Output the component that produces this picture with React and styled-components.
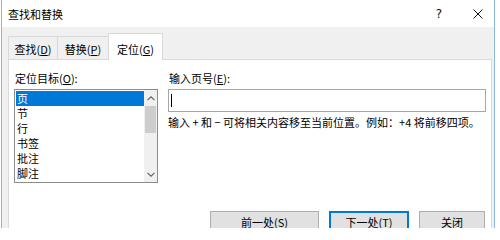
import React from "react";
import styled, { createGlobalStyle } from "styled-components";

const GlobalStyle = createGlobalStyle`
  html, body {
    margin: 0;
    padding: 0;
    background: #fff;
  }
  body {
    font-family: "Noto Sans CJK SC", "Noto Sans", sans-serif;
    font-size: 11px;
    color: #000;
  }
`;

const targets = ["页", "节", "行", "书签", "批注", "脚注"];

const tabs = [
  { text: "查找", key: "D", width: 50 },
  { text: "替换", key: "P", width: 52 },
  { text: "定位", key: "G", width: 55, active: true },
];

const buttons = [
  { text: "前一处", key: "S", width: 109 },
  { text: "下一处", key: "T", width: 80, primary: true },
  { text: "关闭", width: 66 },
];

const Chevron = ({ down }) => (
  <svg width="8" height="5" viewBox="0 0 8 5">
    <path
      d={down ? "M0.5 0.8 L4 4.2 L7.5 0.8" : "M0.5 4.2 L4 0.8 L7.5 4.2"}
      fill="none"
      stroke="#606060"
      strokeWidth="1.1"
    />
  </svg>
);

const Accel = ({ text, k, colon }) => (
  <>
    {text}
    {k && (
      <>
        (<u>{k}</u>)
      </>
    )}
    {colon && ":"}
  </>
);

const App = () => {
  return (
    <>
      <GlobalStyle />
      <Dialog>
        <TitleBar>
          <Title>查找和替换</Title>
          <TitleButtons>
            <TitleBtn>?</TitleBtn>
            <TitleBtn>
              <svg width="10" height="10" viewBox="0 0 10 10">
                <path d="M0.5 0.5 L9.5 9.5 M9.5 0.5 L0.5 9.5" stroke="#111" strokeWidth="1" />
              </svg>
            </TitleBtn>
          </TitleButtons>
        </TitleBar>
        <Body>
          <TabStrip>
            {tabs.map((t, i) => (
              <Tab key={t.text} $active={t.active} $w={t.width} $first={i === 0}>
                <Accel text={t.text} k={t.key} />
              </Tab>
            ))}
          </TabStrip>
          <Panel>
            <Columns>
              <LeftCol>
                <Label>
                  <Accel text="定位目标" k="O" colon />
                </Label>
                <ListBox>
                  <Items>
                    {targets.map((item, i) => (
                      <Item key={item} $selected={i === 0}>
                        {item}
                      </Item>
                    ))}
                  </Items>
                  <ScrollBar>
                    <Arrow>
                      <Chevron />
                    </Arrow>
                    <Thumb />
                    <Track />
                    <Arrow>
                      <Chevron down />
                    </Arrow>
                  </ScrollBar>
                </ListBox>
              </LeftCol>
              <RightCol>
                <Label>
                  <Accel text="输入页号" k="E" colon />
                </Label>
                <PageInput>
                  <Caret />
                </PageInput>
                <Hint>输入 + 和 − 可将相关内容移至当前位置。例如：+4 将前移四项。</Hint>
              </RightCol>
            </Columns>
            <ButtonRow>
              {buttons.map((b) => (
                <Button key={b.text} $w={b.width} $primary={b.primary}>
                  <Accel text={b.text} k={b.key} />
                </Button>
              ))}
            </ButtonRow>
          </Panel>
        </Body>
      </Dialog>
    </>
  );
};

const Dialog = styled.div`
  margin-left: 1px;
  width: 494px;
  height: 228px;
  box-sizing: border-box;
  border-left: 1px solid #8cb8e0;
  border-right: 1px solid #8cb8e0;
  display: flex;
  flex-direction: column;
  overflow: hidden;
  background: #f0f0f0;
`;

const TitleBar = styled.div`
  height: 27px;
  flex: none;
  background: #fff;
  display: flex;
  align-items: center;
  padding-left: 6px;
`;

const Title = styled.div`
  font-size: 11px;
  line-height: 15px;
  margin-top: 2px;
`;

const TitleButtons = styled.div`
  margin-left: auto;
  display: flex;
  gap: 9px;
  padding-right: 1px;
`;

const TitleBtn = styled.div`
  width: 30px;
  height: 27px;
  display: flex;
  align-items: center;
  justify-content: center;
  font-family: "DejaVu Sans", sans-serif;
  font-size: 12px;
  color: #111;
`;

const Body = styled.div`
  flex: 1;
  display: flex;
  flex-direction: column;
  padding: 6px 2px 0 6px;
`;

const TabStrip = styled.div`
  height: 26px;
  flex: none;
  display: flex;
  align-items: flex-end;
`;

const Tab = styled.div`
  box-sizing: border-box;
  width: ${(p) => p.$w}px;
  height: ${(p) => (p.$active ? 27 : 23)}px;
  margin-left: ${(p) => (p.$first ? 0 : -1)}px;
  margin-bottom: ${(p) => (p.$active ? -1 : 0)}px;
  position: relative;
  z-index: ${(p) => (p.$active ? 1 : 0)};
  background: ${(p) => (p.$active ? "#fff" : "#f0f0f0")};
  border: 1px solid #d9d9d9;
  border-bottom: none;
  display: flex;
  align-items: flex-end;
  justify-content: center;
  padding-bottom: ${(p) => (p.$active ? 3 : 2)}px;
  font-size: 11px;
  line-height: 15px;
  white-space: nowrap;
`;

const Panel = styled.div`
  flex: 1;
  background: #fff;
  border: 1px solid #d9d9d9;
  padding: 11px 5px 0 5px;
  display: flex;
  flex-direction: column;
`;

const Columns = styled.div`
  display: flex;
  gap: 10px;
`;

const LeftCol = styled.div`
  width: 144px;
  flex: none;
  display: flex;
  flex-direction: column;
`;

const RightCol = styled.div`
  flex: 1;
  display: flex;
  flex-direction: column;
`;

const Label = styled.div`
  height: 15px;
  line-height: 15px;
  margin-bottom: 3px;
  padding-left: 1px;
  white-space: nowrap;
`;

const ListBox = styled.div`
  box-sizing: border-box;
  height: 94px;
  border: 1px solid #8c8c8c;
  display: flex;
  overflow: hidden;
`;

const Items = styled.div`
  flex: 1;
  padding: 1px 0 0 1px;
`;

const Item = styled.div`
  height: 15px;
  line-height: 14px;
  padding-left: 1px;
  background: ${(p) => (p.$selected ? "#0078d7" : "transparent")};
  color: ${(p) => (p.$selected ? "#fff" : "#000")};
`;

const ScrollBar = styled.div`
  width: 13px;
  flex: none;
  background: #f0f0f0;
  display: flex;
  flex-direction: column;
`;

const Arrow = styled.div`
  height: 16px;
  display: flex;
  align-items: center;
  justify-content: center;
`;

const Thumb = styled.div`
  height: 27px;
  margin: 0 1px;
  background: #cdcdcd;
`;

const Track = styled.div`
  flex: 1;
`;

const PageInput = styled.div`
  box-sizing: border-box;
  height: 23px;
  border: 1px solid #a6a6a6;
  display: flex;
  align-items: center;
  padding-left: 2px;
`;

const Caret = styled.div`
  width: 1px;
  height: 13px;
  background: #000;
`;

const Hint = styled.div`
  margin-top: 3px;
  line-height: 15px;
  white-space: nowrap;
`;

const ButtonRow = styled.div`
  margin-top: 28px;
  display: flex;
  justify-content: flex-end;
  gap: 10px;
  padding-right: 1px;
`;

const Button = styled.div`
  box-sizing: border-box;
  width: ${(p) => p.$w}px;
  height: 23px;
  flex: none;
  background: #e1e1e1;
  border: ${(p) => (p.$primary ? "2px solid #0078d7" : "1px solid #adadad")};
  display: flex;
  align-items: center;
  justify-content: center;
  line-height: 15px;
  white-space: nowrap;
`;

export default App;
